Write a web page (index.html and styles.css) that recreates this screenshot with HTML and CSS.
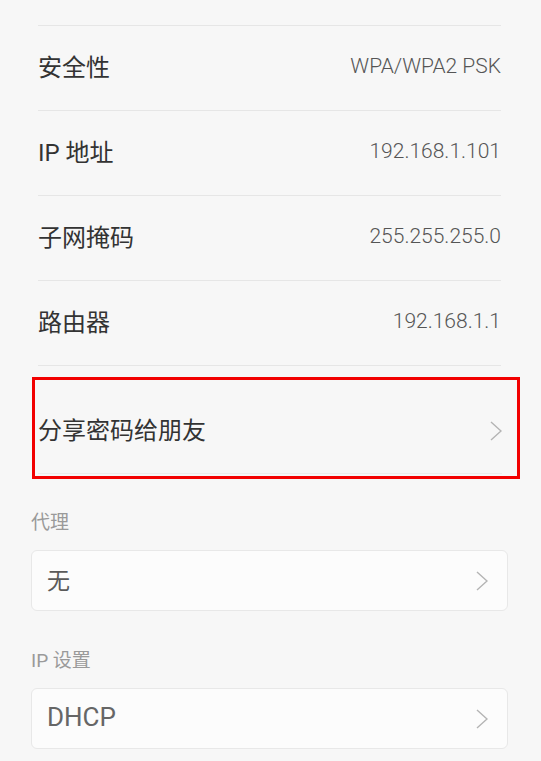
FILE: index.html
```html
<!DOCTYPE html>
<html lang="zh-CN">
<head>
<meta charset="utf-8">
<link rel="stylesheet" href="styles.css">
</head>
<body>
<div class="page">
  <div class="info-list">
    <div class="row"><span class="label">安全性</span><span class="value">WPA/WPA2 PSK</span></div>
    <div class="row"><span class="label">IP 地址</span><span class="value">192.168.1.101</span></div>
    <div class="row"><span class="label">子网掩码</span><span class="value">255.255.255.0</span></div>
    <div class="row"><span class="label">路由器</span><span class="value">192.168.1.1</span></div>
  </div>
  <div class="highlight">
    <div class="row share-row">
      <span class="label">分享密码给朋友</span>
      <svg class="chevron" width="12" height="20" viewBox="0 0 12 20"><polyline points="1,1 11,10 1,19" fill="none" stroke="#b4b4b4" stroke-width="1.4"/></svg>
    </div>
  </div>
  <div class="section-title first">代理</div>
  <div class="card"><span class="card-text">无</span>
    <svg class="chevron" width="12" height="20" viewBox="0 0 12 20"><polyline points="1,1 11,10 1,19" fill="none" stroke="#b4b4b4" stroke-width="1.4"/></svg>
  </div>
  <div class="section-title">IP 设置</div>
  <div class="card"><span class="card-text latin">DHCP</span>
    <svg class="chevron" width="12" height="20" viewBox="0 0 12 20"><polyline points="1,1 11,10 1,19" fill="none" stroke="#b4b4b4" stroke-width="1.4"/></svg>
  </div>
</div>
</body>
</html>
```

FILE: styles.css
```css
html, body {
  margin: 0;
  padding: 0;
  background: #f7f7f7;
}
body {
  font-family: Roboto, "Noto Sans CJK SC", sans-serif;
  width: 541px;
  height: 761px;
  overflow: hidden;
}
.page {
  padding-top: 25px;
}
.info-list {
  margin: 0 40px 0 38px;
  border-top: 1px solid #e6e6e6;
}
.row {
  box-sizing: border-box;
  height: 85px;
  padding-bottom: 5px;
  border-bottom: 1px solid #e6e6e6;
  display: flex;
  align-items: center;
  justify-content: space-between;
}
.label {
  font-size: 24px;
  color: #333333;
}
.value {
  font-size: 21px;
  font-weight: 300;
  color: #555555;
}
.highlight {
  margin: 11px 21px 0 32px;
  border: 3px solid #f20000;
  padding: 9px 15px 2px 3px;
}
.share-row {
  border-bottom-color: #ececec;
}
.share-row .chevron {
  margin-top: 4px;
}
.section-title {
  font-size: 19px;
  line-height: 24px;
  color: #9a9a9a;
  margin: 38px 0 15px 31px;
}
.section-title.first {
  margin-top: 32px;
}
.card {
  box-sizing: border-box;
  margin: 0 33px 0 31px;
  height: 61px;
  border: 1px solid #e8e8e8;
  border-radius: 6px;
  background: #fcfcfc;
  display: flex;
  align-items: center;
  justify-content: space-between;
  padding: 0 19px 4px 15px;
}
.card .chevron {
  margin-top: 4px;
}
.card-text {
  font-size: 23px;
  color: #5a5a5a;
}
.card-text.latin {
  font-size: 26px;
  color: #666666;
}
```
